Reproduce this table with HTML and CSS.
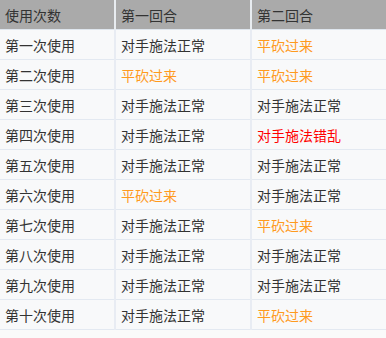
FILE: index.html
```html
<!DOCTYPE html>
<html>
<head>
<meta charset="utf-8">
<link rel="stylesheet" href="styles.css">
</head>
<body>
<table class="tbl">
  <colgroup><col class="c1"><col class="c2"><col class="c3"></colgroup>
  <thead>
    <tr><th>使用次数</th><th>第一回合</th><th>第二回合</th></tr>
  </thead>
  <tbody>
    <tr><td>第一次使用</td><td>对手施法正常</td><td class="o">平砍过来</td></tr>
    <tr><td>第二次使用</td><td class="o">平砍过来</td><td class="o">平砍过来</td></tr>
    <tr><td>第三次使用</td><td>对手施法正常</td><td>对手施法正常</td></tr>
    <tr><td>第四次使用</td><td>对手施法正常</td><td class="r">对手施法错乱</td></tr>
    <tr><td>第五次使用</td><td>对手施法正常</td><td>对手施法正常</td></tr>
    <tr><td>第六次使用</td><td class="o">平砍过来</td><td>对手施法正常</td></tr>
    <tr><td>第七次使用</td><td>对手施法正常</td><td class="o">平砍过来</td></tr>
    <tr><td>第八次使用</td><td>对手施法正常</td><td>对手施法正常</td></tr>
    <tr><td>第九次使用</td><td>对手施法正常</td><td>对手施法正常</td></tr>
    <tr><td>第十次使用</td><td>对手施法正常</td><td class="o">平砍过来</td></tr>
  </tbody>
</table>
</body>
</html>
```
FILE: styles.css
```css
html, body {
  margin: 0;
  padding: 0;
  background: #fafafa;
}
.tbl {
  width: 386px;
  border-collapse: collapse;
  table-layout: fixed;
  font-family: "Noto Sans CJK SC", "Noto Sans", sans-serif;
  font-size: 14px;
  color: #333;
}
.c1 { width: 115px; }
.c2 { width: 136px; }
.c3 { width: 135px; }
.tbl th {
  background: #aaaaaa;
  font-weight: normal;
  text-align: left;
  height: 29px;
  padding: 0 0 0 5px;
  border-left: 2px solid #e8ecf0;
  border-bottom: 1px solid #dfe6ee;
  color: #333;
}
.tbl th:first-child, .tbl td:first-child { border-left: none; }
.tbl td {
  background: #f8f9fa;
  height: 29px;
  padding: 0 0 0 5px;
  border-left: 2px solid #e8ecf3;
  border-bottom: 1px solid #e3e9f1;
}
.o { color: #ff9a1e; }
.r { color: #ff0000; }
```
